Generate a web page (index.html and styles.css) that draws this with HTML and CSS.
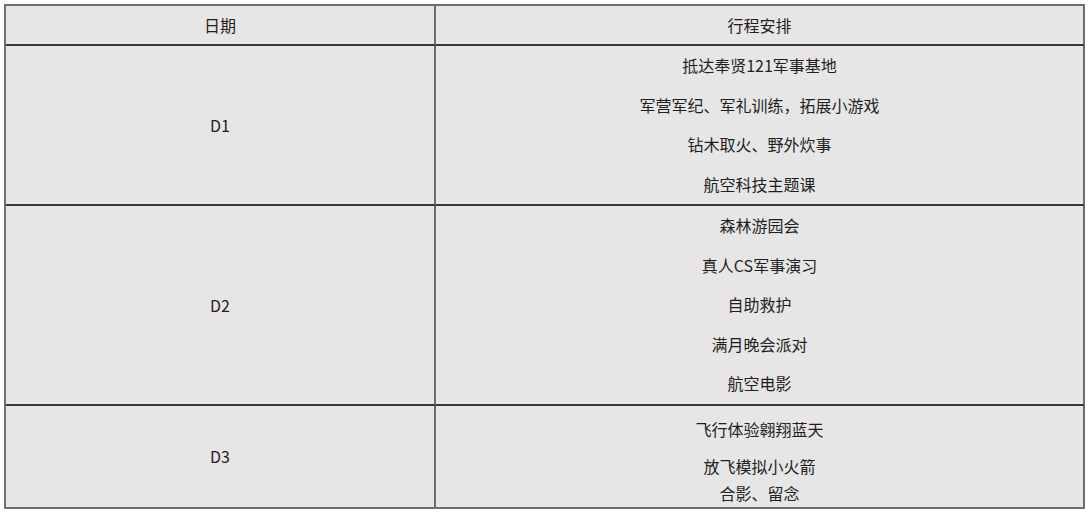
FILE: index.html
```html
<!DOCTYPE html>
<html lang="zh-CN">
<head>
<meta charset="utf-8">
<title>行程安排</title>
<link rel="stylesheet" href="styles.css">
</head>
<body>
<table class="plan">
  <colgroup>
    <col class="col-date">
    <col class="col-items">
  </colgroup>
  <thead>
    <tr>
      <th class="cell cell--date">日期</th>
      <th class="cell cell--items">行程安排</th>
    </tr>
  </thead>
  <tbody>
    <tr class="row row--d1">
      <td class="cell cell--date">D1</td>
      <td class="cell cell--items">
        <p class="item">抵达奉贤121军事基地</p>
        <p class="item">军营军纪、军礼训练，拓展小游戏</p>
        <p class="item">钻木取火、野外炊事</p>
        <p class="item">航空科技主题课</p>
      </td>
    </tr>
    <tr class="row row--d2">
      <td class="cell cell--date">D2</td>
      <td class="cell cell--items">
        <p class="item">森林游园会</p>
        <p class="item">真人CS军事演习</p>
        <p class="item">自助救护</p>
        <p class="item">满月晚会派对</p>
        <p class="item">航空电影</p>
      </td>
    </tr>
    <tr class="row row--d3 row--last">
      <td class="cell cell--date">D3</td>
      <td class="cell cell--items cell--compact">
        <p class="item item--c1">飞行体验翱翔蓝天</p>
        <p class="item item--c2">放飞模拟小火箭</p>
        <p class="item item--c3">合影、留念</p>
      </td>
    </tr>
  </tbody>
</table>
</body>
</html>
```
FILE: styles.css
```css
html, body {
  margin: 0;
  padding: 0;
  background: #ffffff;
}

body {
  font-family: "Noto Sans CJK SC", "Noto Sans", sans-serif;
  font-size: 16px;
  color: #1f1f1f;
}

.plan {
  margin: 4px;
  width: 1081px;
  table-layout: fixed;
  border-collapse: separate;
  border-spacing: 0;
  border-top: 2px solid #6e6e6e;
  border-left: 2px solid #6e6e6e;
  background: #e7e5e5;
}

.col-date { width: 430px; }
.col-items { width: 649px; }

.cell {
  padding: 0;
  text-align: center;
  vertical-align: middle;
  font-weight: 400;
  border-right: 2px solid #6e6e6e;
  border-bottom: 2px solid #383838;
}

thead .cell {
  height: 38px;
  line-height: 38px;
}

.row--last .cell {
  border-bottom-color: #6e6e6e;
}

.item {
  margin: 0;
  line-height: 39.5px;
  white-space: nowrap;
}

.cell--compact {
  padding: 10px 0 1px;
}

.cell--compact .item {
  line-height: 26px;
}

.item--c2 { margin-top: 11px; }
.item--c3 { margin-top: 1px; }
```
